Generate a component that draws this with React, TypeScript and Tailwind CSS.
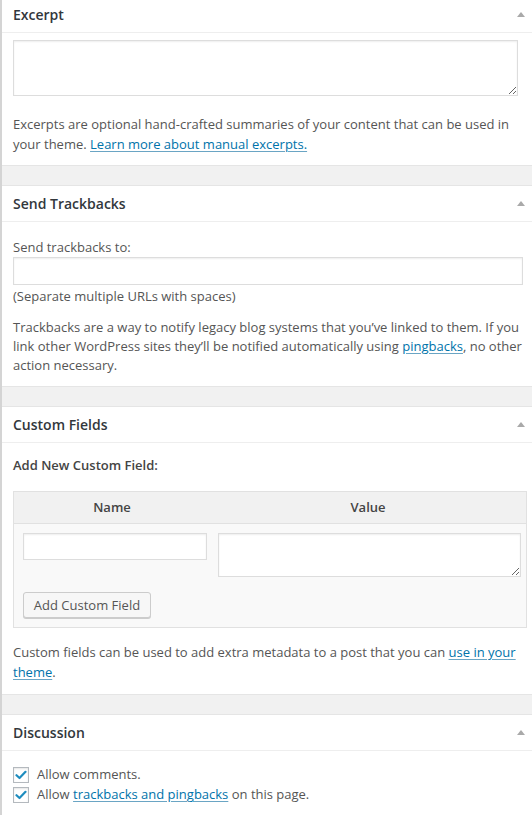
import React from "react";

function Arrow() {
  return (
    <svg width="8" height="5" viewBox="0 0 8 5" className="shrink-0">
      <polygon points="0,5 4,0 8,5" fill="#a9a9a9" />
    </svg>
  );
}

function Panel({
  title,
  children,
  className = "",
}: {
  title: string;
  children: React.ReactNode;
  className?: string;
}) {
  return (
    <div className={`bg-white border-y border-[#e5e5e5] ${className}`}>
      <div className="h-[36px] flex items-center justify-between pl-[11px] pr-[7px] border-b border-[#eeeeee]">
        <span className="text-[14px] font-semibold text-[#32373c] leading-[20px]">{title}</span>
        <Arrow />
      </div>
      {children}
    </div>
  );
}

function Check() {
  return (
    <span className="w-[16px] h-[16px] border border-[#b4b9be] bg-white flex items-center justify-center shrink-0 shadow-[inset_0_1px_2px_rgba(0,0,0,0.1)]">
      <svg width="12" height="10" viewBox="0 0 12 10">
        <path d="M1.5 5.2 L4.5 8 L10.5 1.8" stroke="#1e8cbe" strokeWidth="2.2" fill="none" strokeLinecap="round" strokeLinejoin="round" />
      </svg>
    </span>
  );
}

const link = "text-[#0073aa] underline underline-offset-2 decoration-[#6aa5c4]";

export default function App() {
  return (
    <div className="w-[532px] h-[815px] overflow-hidden bg-[#f1f1f1] border-l-2 border-[#d4d4d4] font-['Open_Sans',sans-serif] text-[13px] text-[#555]">
      <div className="-mt-[4px] flex flex-col gap-[19px]">
        <Panel title="Excerpt">
          <div className="pl-[11px] pt-[7px] pb-[11px]">
            <textarea className="block w-[505px] h-[56px] border border-[#dddddd] bg-white shadow-[inset_0_1px_2px_rgba(0,0,0,0.07)] outline-none" />
            <p className="mt-[18px] leading-[20px] w-[512px]">
              Excerpts are optional hand-crafted summaries of your content that can be used in your theme.{" "}
              <span className={link}>Learn more about manual excerpts.</span>
            </p>
          </div>
        </Panel>

        <Panel title="Send Trackbacks">
          <div className="pl-[11px] pt-[16px] pb-[11px]">
            <div className="leading-[19px]">Send trackbacks to:</div>
            <input
              type="text"
              className="block w-[510px] h-[28px] border border-[#dddddd] bg-white shadow-[inset_0_1px_2px_rgba(0,0,0,0.07)] outline-none"
            />
            <div className="mt-[2px] leading-[19px]">(Separate multiple URLs with spaces)</div>
            <p className="mt-[12px] leading-[19px] w-[512px]">
              Trackbacks are a way to notify legacy blog systems that you’ve linked to them. If you link other WordPress sites they’ll be notified automatically using{" "}
              <span className={link}>pingbacks</span>, no other action necessary.
            </p>
          </div>
        </Panel>

        <Panel title="Custom Fields">
          <div className="pl-[11px] pt-[13px] pb-[12px]">
            <div className="leading-[19px] font-semibold text-[#444]">Add New Custom Field:</div>
            <div className="mt-[16px] w-[514px] border border-[#e1e1e1] bg-[#f9f9f9]">
              <div className="h-[32px] bg-[#f1f1f1] border-b border-[#e1e1e1] flex items-center font-semibold text-[#444]">
                <div className="w-[196px] text-center">Name</div>
                <div className="flex-1 text-center">Value</div>
              </div>
              <div className="pt-[9px] pb-[9px] flex flex-col">
                <div className="flex items-start">
                  <div className="w-[196px] pl-[9px]">
                    <input
                      type="text"
                      className="block w-[184px] h-[27px] border border-[#dddddd] bg-white shadow-[inset_0_1px_2px_rgba(0,0,0,0.07)] outline-none"
                    />
                  </div>
                  <div className="pl-[8px]">
                    <textarea className="block w-[303px] h-[44px] border border-[#dddddd] bg-white shadow-[inset_0_1px_2px_rgba(0,0,0,0.07)] outline-none" />
                  </div>
                </div>
                <div className="pl-[9px] mt-[15px]">
                  <button className="h-[26px] w-[128px] border border-[#cccccc] rounded-[3px] bg-[#f7f7f7] shadow-[0_1px_0_#cccccc] text-[13px] text-[#555] leading-[24px]">
                    Add Custom Field
                  </button>
                </div>
              </div>
            </div>
            <p className="mt-[14px] leading-[20px] w-[512px]">
              Custom fields can be used to add extra metadata to a post that you can{" "}
              <span className={link}>use in your theme</span>.
            </p>
          </div>
        </Panel>

        <Panel title="Discussion" className="pb-[30px]">
          <div className="pl-[11px] pt-[14px] flex flex-col">
            <div className="h-[20px] flex items-center gap-[8px]">
              <Check />
              <span>Allow comments.</span>
            </div>
            <div className="h-[20px] flex items-center gap-[8px]">
              <Check />
              <span>
                Allow <span className={link}>trackbacks and pingbacks</span> on this page.
              </span>
            </div>
          </div>
        </Panel>
      </div>
    </div>
  );
}
